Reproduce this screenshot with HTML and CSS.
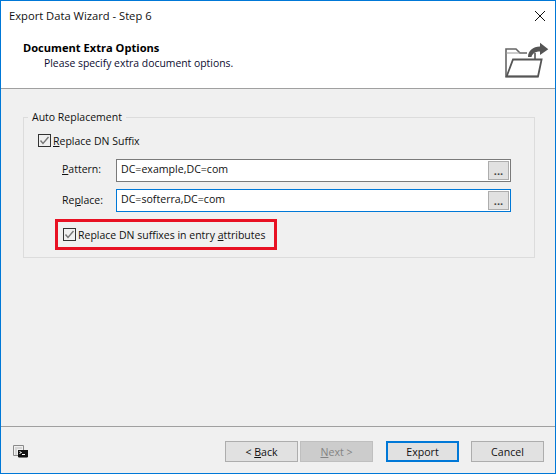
FILE: index.html
```html
<!DOCTYPE html>
<html lang="en">
<head>
<meta charset="utf-8">
<title>Export Data Wizard - Step 6</title>
<link rel="stylesheet" href="styles.css">
</head>
<body>
<div class="window">
  <div class="titlebar">
    <span class="title">Export Data Wizard - Step 6</span>
    <svg class="close" width="10" height="10" viewBox="0 0 10 10"><path d="M0 0L10 10M10 0L0 10" stroke="#111" stroke-width="1" fill="none"/></svg>
  </div>
  <header class="head">
    <div class="head-text">
      <div class="head-title">Document Extra Options</div>
      <div class="head-sub">Please specify extra document options.</div>
    </div>
    <svg class="head-icon" width="44" height="36" viewBox="0 0 44 36">
      <path d="M33 34.5H1V7H11L15 11H22" fill="none" stroke="#666" stroke-width="1.6"/>
      <path d="M1 11H15" fill="none" stroke="#999" stroke-width="1"/>
      <path d="M1.6 34.5L8 17.5H36.6L33 34.5Z" fill="none" stroke="#555" stroke-width="1.8"/>
      <path d="M23 15C23 9 28 4.5 35 4.5V.7L43.3 7.3L35 13V9.5C31 9.5 27.500 11 26.500 15Z" fill="#555"/>
      <path d="M30 11V17" stroke="#555" stroke-width="1.6"/>
    </svg>
  </header>
  <main class="main">
    <fieldset class="group">
      <legend class="group-legend">Auto Replacement</legend>
      <label class="check">
        <svg class="checkbox" width="13" height="13" viewBox="0 0 13 13"><rect x=".5" y=".5" width="12" height="12" fill="#f0f0f0" stroke="#333"/><path d="M2.5 6.5L5 9.5L10.5 3" fill="none" stroke="#777" stroke-width="1.4"/></svg>
        <span><u>R</u>eplace DN Suffix</span>
      </label>
      <div class="field first">
        <span class="field-label"><u>P</u>attern:</span>
        <div class="input">
          <span class="input-text">DC=example,DC=com</span>
          <button class="browse">...</button>
        </div>
      </div>
      <div class="field">
        <span class="field-label">Re<u>p</u>lace:</span>
        <div class="input focus">
          <span class="input-text">DC=softerra,DC=com</span>
          <button class="browse">...</button>
        </div>
      </div>
      <div class="highlight">
        <label class="check">
          <svg class="checkbox" width="13" height="13" viewBox="0 0 13 13"><rect x=".5" y=".5" width="12" height="12" fill="#f0f0f0" stroke="#333"/><path d="M2.5 6.5L5 9.5L10.5 3" fill="none" stroke="#777" stroke-width="1.4"/></svg>
          <span>Replace DN suffixes in entry <u>a</u>ttributes</span>
        </label>
      </div>
    </fieldset>
  </main>
  <footer class="foot">
    <svg class="console" width="16" height="16" viewBox="0 0 16 16">
      <path d="M.5.5H10.5V10.5H.5Z" fill="#f0f0f0" stroke="#8a8a8a"/>
      <path d="M2 3H9M2 5H4M2 7H4M2 9H4" stroke="#bbb"/>
      <rect x="5" y="5" width="10" height="7" fill="#111"/>
      <path d="M5.500 12.500H14.500" stroke="#777"/>
      <path d="M6.500 6.500L8.500 7.500L6.500 8.500M9 9.500H12" stroke="#fff" fill="none"/>
    </svg>
    <button class="btn">&lt; <u>B</u>ack</button>
    <button class="btn disabled next"><u>N</u>ext &gt;</button>
    <button class="btn default">Export</button>
    <button class="btn cancel">Cancel</button>
  </footer>
</div>
</body>
</html>
```

FILE: styles.css
```css
* { box-sizing: border-box; }
html, body { margin: 0; padding: 0; }
body {
  width: 556px;
  height: 474px;
  overflow: hidden;
  font-family: "Open Sans", "Noto Sans", sans-serif;
  font-size: 10.5px;
  color: #000;
}
.window {
  width: 556px;
  height: 474px;
  border: 1px solid #0078d7;
  display: flex;
  flex-direction: column;
  background: #f0f0f0;
}
.titlebar {
  height: 30px;
  flex: none;
  background: #fff;
  display: flex;
  align-items: center;
  justify-content: space-between;
  padding: 0 10px 0 8px;
}
.title { font-size: 11.2px; color: #111; padding-bottom: 2px; }
.head {
  height: 58px;
  flex: none;
  background: #fff;
  border-bottom: 1px solid #a0a0a0;
  display: flex;
  justify-content: space-between;
  padding: 9px 6px 0 22px;
}
.head-title { font-weight: 700; font-size: 11.1px; line-height: 15px; margin-bottom: 1px; }
.head-sub { margin-left: 21px; line-height: 14px; font-size: 10.4px; color: #0c0c30; }
.head-icon { margin-top: 2px; }
.main {
  flex: 1;
  padding: 20px 20px 0 22px;
}
.group {
  margin: 0;
  min-width: 0;
  height: 149px;
  border: 1px solid #dcdcdc;
  padding: 9px 0 0 14px;
}
.group-legend {
  margin-left: -10px;
  padding: 0 4px;
  font-size: 10.5px;
  line-height: 16px;
  color: #111;
}
.check {
  display: flex;
  align-items: center;
  gap: 2px;
  height: 13px;
  color: #111;
  white-space: nowrap;
}
.checkbox { flex: none; }
.field {
  display: flex;
  align-items: center;
  margin: 7px 0 0 24px;
}
.field.first { margin-top: 12px; }
.field-label { width: 54px; flex: none; color: #111; padding-bottom: 1px; }
.field.first .field-label { padding-bottom: 3px; }
.input {
  width: 395px;
  height: 23px;
  border: 1px solid #7a7a7a;
  background: #fff;
  display: flex;
  align-items: center;
  justify-content: space-between;
  padding: 1px 1px 1px 4px;
}
.input.focus { border-color: #0078d7; }
.input-text { color: #111; font-size: 10.6px; padding-bottom: 4px; }
.browse {
  width: 21px;
  height: 19px;
  border: 1px solid #adadad;
  background: #e1e1e1;
  padding: 0;
  font: 700 11px "Open Sans", sans-serif;
  color: #444;
  line-height: 14px;
}
.highlight {
  width: 222px;
  height: 31px;
  margin: 7px 0 0 17px;
  border: 3px solid #e81123;
  display: flex;
  align-items: center;
  padding-left: 5px;
}
.foot {
  height: 47px;
  flex: none;
  border-top: 1px solid #a0a0a0;
  display: flex;
  align-items: flex-start;
  padding: 14px 11px 0 12px;
}
.console { margin: 4px auto 0 0; }
.btn {
  width: 73px;
  height: 21px;
  border: 1px solid #adadad;
  background: #e1e1e1;
  font: 10.6px "Open Sans", sans-serif;
  color: #111;
  padding: 0;
}
.btn.next { margin-left: 2px; }
.btn.disabled { background: #ccc; border-color: #bfbfbf; color: #838383; }
.btn.default { margin-left: 13px; border: 2px solid #0078d7; }
.btn.cancel { margin-left: 12px; }
```
